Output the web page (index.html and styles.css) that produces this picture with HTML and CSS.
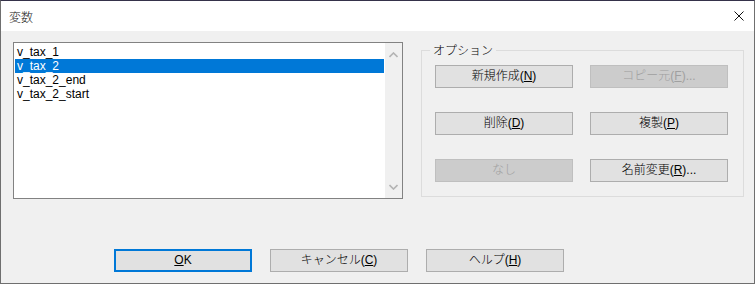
FILE: index.html
```html
<!DOCTYPE html>
<html lang="ja">
  <head>
    <meta charset="UTF-8" />
    <meta name="viewport" content="width=device-width, initial-scale=1.0" />
    <title>変数</title>
    <link rel="stylesheet" href="styles.css">
  </head>
  <body>
    <div class="window">
      <div class="title-bar">
        <span class="title">変数</span>
        <svg class="close" width="10" height="10" viewBox="0 0 10 10">
          <path d="M0.5 0.5 L9.5 9.5 M9.5 0.5 L0.5 9.5" stroke="#111" stroke-width="1" fill="none" />
        </svg>
      </div>

      <div class="content">
        <div class="top-row">
          <div class="list-box">
            <ul class="items">
              <li>v_tax_1</li>
              <li class="selected">v_tax_2</li>
              <li>v_tax_2_end</li>
              <li>v_tax_2_start</li>
            </ul>
            <div class="scrollbar">
              <svg width="9" height="6" viewBox="0 0 9 6">
                <path d="M0.5 5 L4.5 1 L8.5 5" stroke="#b4b4b4" stroke-width="1.6" fill="none" />
              </svg>
              <svg width="9" height="6" viewBox="0 0 9 6">
                <path d="M0.5 1 L4.5 5 L8.5 1" stroke="#b4b4b4" stroke-width="1.6" fill="none" />
              </svg>
            </div>
          </div>

          <fieldset class="options">
            <legend>オプション</legend>
            <div class="option-grid">
              <button class="btn">新規作成(<u>N</u>)</button>
              <button class="btn" disabled>コピー元(<u>F</u>)...</button>
              <button class="btn">削除(<u>D</u>)</button>
              <button class="btn">複製(<u>P</u>)</button>
              <button class="btn" disabled>なし</button>
              <button class="btn">名前変更(<u>R</u>)...</button>
            </div>
          </fieldset>
        </div>

        <div class="bottom-row">
          <button class="btn default"><u>O</u>K</button>
          <button class="btn">キャンセル(<u>C</u>)</button>
          <button class="btn">ヘルプ(<u>H</u>)</button>
        </div>
      </div>
    </div>
  </body>
</html>
```

FILE: styles.css
```css
* {
    box-sizing: border-box;
}

body {
    margin: 0;
    font-family: "Liberation Sans", "Noto Sans CJK JP", sans-serif;
    font-size: 12px;
    color: #000;
}

.window {
    width: 755px;
    height: 284px;
    border: 1px solid #6f6f6f;
    border-top-color: #35324a;
    background: #f0f0f0;
    display: flex;
    flex-direction: column;
}

.title-bar {
    height: 30px;
    background: #fff;
    display: flex;
    align-items: center;
    justify-content: space-between;
    padding: 0 10px 0 8px;
}

.title {
    font-family: "Noto Sans CJK JP", sans-serif;
    font-weight: 300;
    font-size: 12px;
    color: #111;
}

.content {
    flex: 1;
    padding: 11px 0 0 12px;
}

.top-row {
    display: flex;
    gap: 18px;
    align-items: flex-start;
}

.list-box {
    width: 390px;
    height: 157px;
    border: 1px solid #828282;
    background: #fff;
    display: flex;
    padding-left: 1px;
}

.items {
    list-style: none;
    margin: 0;
    padding: 2px 0 0;
    flex: 1;
    margin-right: 1px;
}

.items li {
    height: 14px;
    line-height: 14px;
    padding-left: 2px;
    font-size: 12px;
}

.items li.selected {
    background: #0078d7;
    color: #fff;
}

.scrollbar {
    width: 17px;
    background: #f0f0f0;
    display: flex;
    flex-direction: column;
    justify-content: space-between;
    align-items: center;
    padding: 9px 0 8px;
}

.options {
    margin: 0;
    margin-top: 1px;
    width: 323px;
    height: 154px;
    border: 1px solid #dcdcdc;
    padding: 8px 0 0 13px;
}

.options legend {
    font-family: "Noto Sans CJK JP", sans-serif;
    font-weight: 300;
    font-size: 12px;
    padding: 0 3px;
    margin-left: -5px;
    line-height: 14px;
}

.option-grid {
    display: grid;
    grid-template-columns: 138px 138px;
    grid-auto-rows: 23px;
    column-gap: 17px;
    row-gap: 24px;
}

.btn {
    height: 23px;
    width: 138px;
    border: 1px solid #adadad;
    background: #e1e1e1;
    font-family: "Liberation Sans", "Noto Sans CJK JP", sans-serif;
    font-weight: 300;
    font-size: 12px;
    color: #000;
    padding: 0;
    line-height: 21px;
}

.btn:disabled {
    background: #cccccc;
    border-color: #bfbfbf;
    color: #a0a0a0;
}

.btn.default {
    border: 2px solid #0078d7;
    line-height: 19px;
}

.bottom-row {
    display: flex;
    gap: 18px;
    padding-left: 101px;
    margin-top: 50px;
}
```
